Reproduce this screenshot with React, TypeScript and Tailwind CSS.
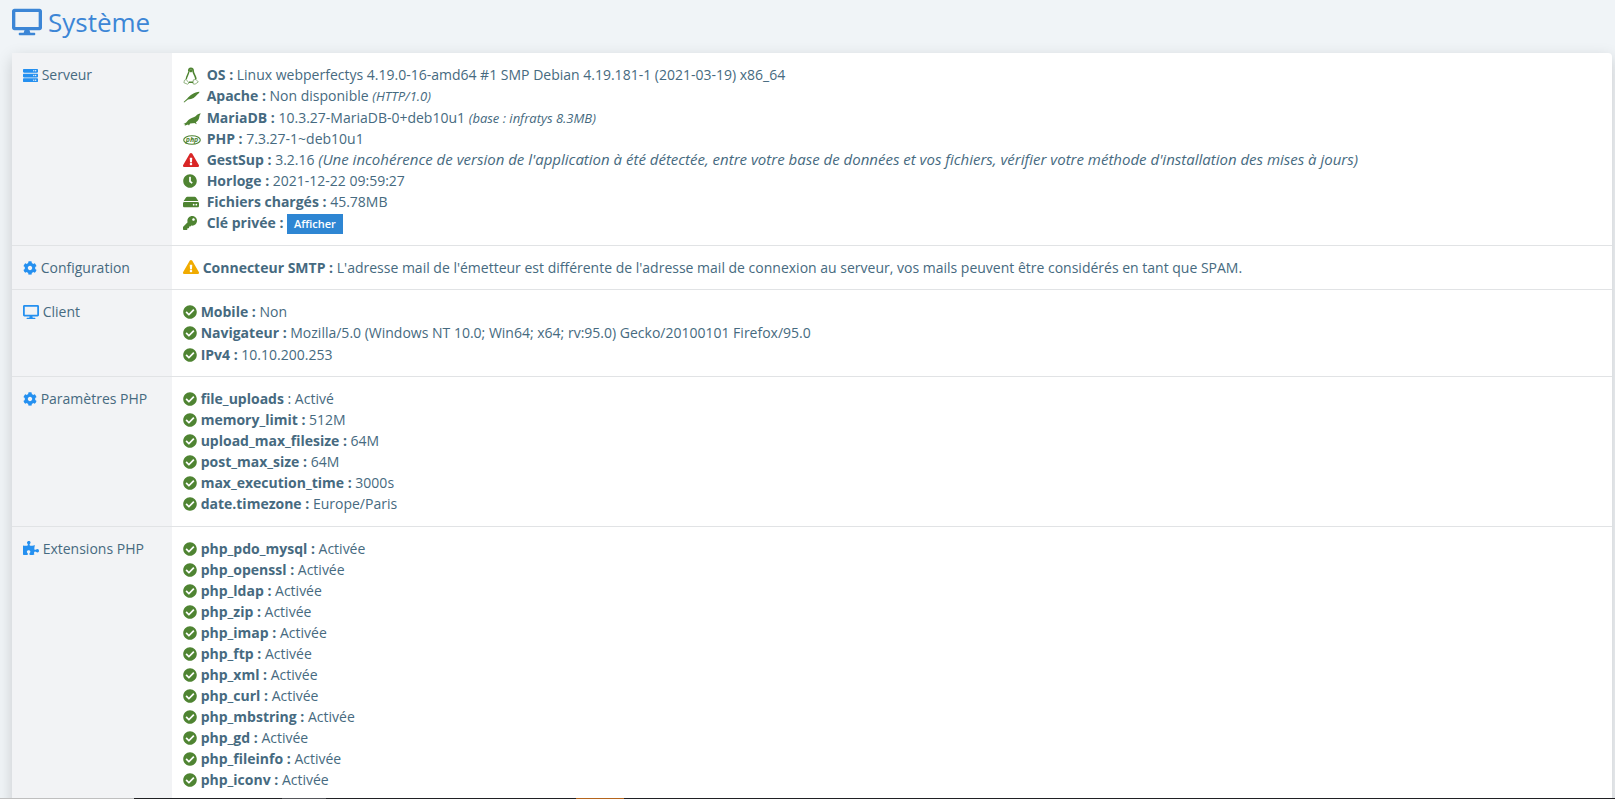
import type { ReactNode } from "react"
import {
    FaCheckCircle,
    FaClock,
    FaCog,
    FaDesktop,
    FaExclamationTriangle,
    FaHdd,
    FaKey,
    FaPuzzlePiece,
    FaServer,
} from "react-icons/fa"

const Check = () => <FaCheckCircle size={14} className="inline-block align-[-2px] text-[#4f8432]" />

const Tux = () => (
    <svg viewBox="0 0 16 18" className="inline-block w-4 h-[18px] align-[-5px]" fill="none" stroke="#4f8432">
        <path d="M5.8 4.400C5.600 2.200 6.400 1.300 7.900 1.300s2.400 1.100 2.300 3.100c.1 2.500 2.700 4.300 2.700 7.900" strokeWidth="1.600" />
        <path d="M5.800 4.400C5.900 7 3.500 8.700 3.300 12.300M6 15.200h4" strokeWidth="1.400" />
        <path d="M.9 15.700l.5-2.300 1.700-1 2.900 3.600-1.500 1.200zM10 16.800l.3-3.900 2.700-.4 2.300 2.500-3.300 2.200z" strokeWidth=".6" />
        <path d="M6.200 2.200h3.400v2L8 5.600 6.200 4.600z" fill="#4f8432" stroke="none" />
    </svg>
)

const Feather = () => (
    <svg viewBox="0 0 17 12" className="inline-block w-[17px] h-3 align-[-2px]" fill="#4f8432">
        <path d="M.6 11l3.700-3.400C6 4.600 11.500 1.200 16.500.7c-.2 1.300-1 1.900-2.200 2.700C12.300 6 9.500 8.300 5 8.500L1.200 11.400z" />
    </svg>
)

const Seal = () => (
    <svg viewBox="0 0 18 13" className="inline-block w-[18px] h-[13px] align-[-3px]" fill="#4f8432">
        <path d="M17.700.3c-.2 1.300-1.100 1.800-1.300 3.300-.3 3-1.500 4.400-3.500 5.600l.9 2-2.500-1.300c-1.700.3-3 .2-4.200.7L6 12.500l-1-.9-3.400 1.100.6-1.200L.4 11c2.600-.7 3.400-2.200 5-4 2.200-2.300 5.700-2.200 7.500-4C14 1.700 15.500.9 17.700.3z" />
    </svg>
)

const PhpLogo = () => (
    <svg viewBox="0 0 18 10" className="inline-block w-[18px] h-[10px] align-[-1px]">
        <ellipse cx="9" cy="5" rx="8.300" ry="4.300" fill="none" stroke="#4f8432" strokeWidth="1.100" />
        <text x="9" y="7.200" textAnchor="middle" className="fill-[#4f8432] text-[7px] font-bold italic">
            php
        </text>
    </svg>
)

type LineProps = { icon: ReactNode; name: string; tall?: boolean; children: ReactNode }

const Line = ({ icon, name, tall, children }: LineProps) => (
    <li className={tall ? "h-[22px] whitespace-nowrap" : "h-[21px] whitespace-nowrap"}>
        {icon} <b>{name} :</b> {children}
    </li>
)

// server lines have icons of different widths, so they sit in a fixed box
const ServerLine = ({ icon, ...rest }: LineProps) => (
    <Line icon={<span className="inline-block w-5">{icon}</span>} {...rest} />
)

const Section = ({ icon, title, children }: { icon: ReactNode; title: string; children: ReactNode }) => (
    <tr className="border-t border-[#e1e3e5] first:border-t-0">
        <th scope="row" className="w-40 bg-[#f2f3f5] px-[11px] py-[11px] text-left align-top font-normal whitespace-nowrap">
            {icon} {title}
        </th>
        <td className="px-[11px] py-[11px] align-top">
            <ul>{children}</ul>
        </td>
    </tr>
)

const phpSettings = [
    ["memory_limit", "512M"],
    ["upload_max_filesize", "64M"],
    ["post_max_size", "64M"],
    ["max_execution_time", "3000s"],
    ["date.timezone", "Europe/Paris"],
]

const extensions = [
    "php_pdo_mysql",
    "php_openssl",
    "php_ldap",
    "php_zip",
    "php_imap",
    "php_ftp",
    "php_xml",
    "php_curl",
    "php_mbstring",
    "php_gd",
    "php_fileinfo",
    "php_iconv",
]

export default function App() {
    return (
        <div className="flex h-screen flex-col bg-[#f0f4f7] font-['Open_Sans',sans-serif] text-sm leading-[21px] text-[#466a80]">
            <main className="min-h-0 flex-1 overflow-hidden pl-3 pr-[3px]">
                <h1 className="flex h-[53px] items-start gap-1.5 pt-1 text-[26px] leading-9 text-[#3c86d6]">
                    <FaDesktop size={30} className="mt-[3px]" />
                    Système
                </h1>
                <div className="min-h-full rounded-sm bg-white shadow-[0_5px_16px_rgba(0,0,0,0.17)]">
                    <table className="w-full border-collapse">
                        <tbody>
                            <Section title="Serveur" icon={<FaServer size={15} className="inline-block align-[-3px] text-[#2590f0]" />}>
                                <ServerLine name="OS" icon={<Tux />}>
                                    Linux webperfectys 4.19.0-16-amd64 #1 SMP Debian 4.19.181-1 (2021-03-19) x86_64
                                </ServerLine>
                                <ServerLine name="Apache" icon={<Feather />} tall>
                                    Non disponible <i className="text-[13px]">(HTTP/1.0)</i>
                                </ServerLine>
                                <ServerLine name="MariaDB" icon={<Seal />}>
                                    10.3.27-MariaDB-0+deb10u1 <i className="text-[13px]">(base : infratys 8.3MB)</i>
                                </ServerLine>
                                <ServerLine name="PHP" icon={<PhpLogo />}>7.3.27-1~deb10u1</ServerLine>
                                <ServerLine name="GestSup" icon={<FaExclamationTriangle size={16} className="inline-block align-[-3px] text-[#d92626]" />}>
                                    3.2.16{" "}
                                    <i className="text-[15px]">
                                        (Une incohérence de version de l'application à été détectée, entre votre base de données et vos fichiers, vérifier votre méthode d'installation des mises à jours)
                                    </i>
                                </ServerLine>
                                <ServerLine name="Horloge" icon={<FaClock size={14} className="inline-block align-[-2px] text-[#4f8432]" />}>
                                    2021-12-22 09:59:27
                                </ServerLine>
                                <ServerLine name="Fichiers chargés" icon={<FaHdd size={16} className="inline-block align-[-3px] text-[#4f8432]" />}>
                                    45.78MB
                                </ServerLine>
                                <ServerLine name="Clé privée" icon={<FaKey size={14} className="inline-block align-[-2px] text-[#4f8432]" />} tall>
                                    <button type="button" className="h-5 bg-[#2e86d3] px-[7px] text-[11px] leading-5 font-semibold text-white">
                                        Afficher
                                    </button>
                                </ServerLine>
                            </Section>
                            <Section title="Configuration" icon={<FaCog size={14} className="inline-block align-[-2px] text-[#2590f0]" />}>
                                <Line name="Connecteur SMTP" icon={<FaExclamationTriangle size={16} className="inline-block align-[-2px] text-[#f0ab00]" />}>
                                    L'adresse mail de l'émetteur est différente de l'adresse mail de connexion au serveur, vos mails peuvent être considérés en tant que SPAM.
                                </Line>
                            </Section>
                            <Section title="Client" icon={<FaDesktop size={16} className="inline-block align-[-3px] text-[#2590f0]" />}>
                                <Line name="Mobile" icon={<Check />}>Non</Line>
                                <Line name="Navigateur" icon={<Check />} tall>
                                    Mozilla/5.0 (Windows NT 10.0; Win64; x64; rv:95.0) Gecko/20100101 Firefox/95.0
                                </Line>
                                <Line name="IPv4" icon={<Check />}>10.10.200.253</Line>
                            </Section>
                            <Section title="Paramètres PHP" icon={<FaCog size={14} className="inline-block align-[-2px] text-[#2590f0]" />}>
                                <li className="h-[21px] whitespace-nowrap">
                                    <Check /> <b>file_uploads</b> : Activé
                                </li>
                                {phpSettings.map(([name, value]) => (
                                    <Line key={name} name={name} icon={<Check />} tall={name === "date.timezone"}>{value}</Line>
                                ))}
                            </Section>
                            <Section title="Extensions PHP" icon={<FaPuzzlePiece size={16} className="inline-block align-[-2px] text-[#2590f0]" />}>
                                {extensions.map((name) => (
                                    <Line key={name} name={name} icon={<Check />}>Activée</Line>
                                ))}
                            </Section>
                        </tbody>
                    </table>
                </div>
            </main>
            {/* top edge of the desktop taskbar */}
            <div className="flex h-px shrink-0 bg-[#202124]">
                <div className="w-[134px] bg-[#bfbfbf]" />
                <div className="ml-[148px] w-11 bg-[#55565a]" />
                <div className="ml-[250px] w-12 bg-[#b5651d]" />
            </div>
        </div>
    )
}
